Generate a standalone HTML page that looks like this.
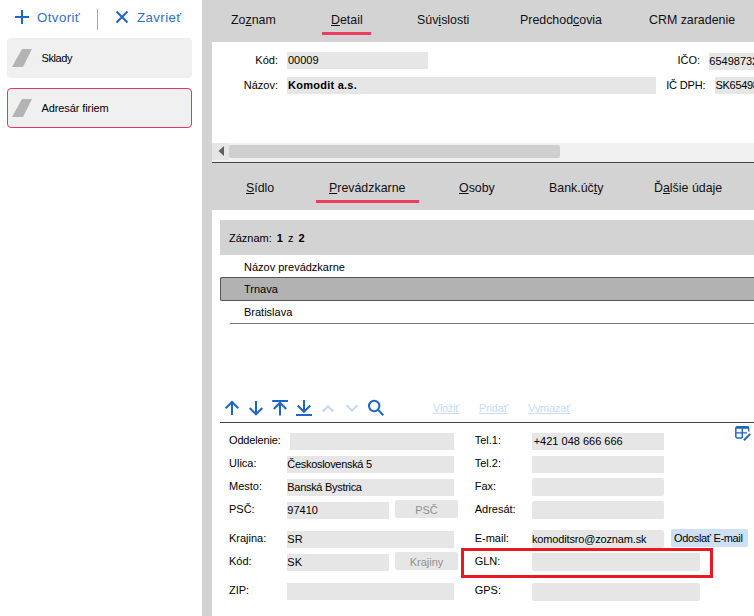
<!DOCTYPE html>
<html><head><meta charset="utf-8">
<style>
html,body{margin:0;padding:0;}
body{width:754px;height:616px;overflow:hidden;background:#fff;position:relative;font-family:"Liberation Sans",sans-serif;font-size:11px;color:#000;}
.a{position:absolute;white-space:nowrap;}
.t{position:absolute;white-space:nowrap;line-height:14px;height:14px;}
.tab{font-size:12.4px;line-height:16px;height:16px;color:#111;}
.f{position:absolute;background:#e6e6e6;height:17px;}
.blue{color:#2f6fc6;}
.btn{position:absolute;background:#e6e6e6;border-radius:2px;color:#909090;text-align:center;line-height:20px;font-size:11px;}
u{text-decoration:underline;text-underline-offset:1px;}
</style></head><body>
<!-- left panel -->
<svg class="a" style="left:14px;top:9px" width="16" height="16" viewBox="0 0 16 16"><path d="M8 1v14M1 8h14" stroke="#1f66c4" stroke-width="2" fill="none"/></svg>
<div class="t blue" style="left:37px;top:9px;font-size:13.3px;line-height:17px;height:17px;letter-spacing:0.4px">Otvoriť</div>
<div class="a" style="left:97px;top:9px;width:1px;height:21px;background:#a9a6c9"></div>
<svg class="a" style="left:115px;top:10px" width="14" height="14" viewBox="0 0 14 14"><path d="M1.5 1.5l11 11M12.5 1.5l-11 11" stroke="#1f66c4" stroke-width="2" fill="none"/></svg>
<div class="t blue" style="left:137px;top:9px;font-size:13.3px;line-height:17px;height:17px;letter-spacing:0.4px">Zavrieť</div>

<div class="a" style="left:7px;top:38px;width:185px;height:40px;background:#f0f0f0;border-radius:4px"></div>
<svg class="a" style="left:12px;top:49px" width="21" height="18" viewBox="0 0 21 18"><path d="M10 0H20L11 18H0z" fill="#b4b4b4"/></svg>
<div class="t" style="left:41.5px;top:51px;letter-spacing:-0.4px">Sklady</div>

<div class="a" style="left:7px;top:88px;width:183px;height:38px;background:#f0f0f0;border:1px solid #e23a62;border-radius:4px"></div>
<svg class="a" style="left:12px;top:99px" width="21" height="18" viewBox="0 0 21 18"><path d="M10 0H20L11 18H0z" fill="#b4b4b4"/></svg>
<div class="t" style="left:41.5px;top:101px;letter-spacing:-0.1px">Adresár firiem</div>

<!-- right gray panel -->
<div class="a" style="left:202px;top:0;width:552px;height:616px;background:#d3d3d3"></div>
<!-- top tabs -->
<div class="t tab" style="left:231px;top:12px">Zo<u>z</u>nam</div>
<div class="t tab" style="left:331px;top:12px"><u>D</u>etail</div>
<div class="a" style="left:322px;top:32px;width:49px;height:3px;background:#ee3c61"></div>
<div class="t tab" style="left:417px;top:12px">Súv<u>i</u>slosti</div>
<div class="t tab" style="left:520px;top:12px">Predchod<u>c</u>ovia</div>
<div class="t tab" style="left:649px;top:12px">CRM zaradenie</div>
<!-- top white -->
<div class="a" style="left:212px;top:42px;width:542px;height:120px;background:#fff"></div>
<div class="t" style="left:212px;width:66px;text-align:right;top:53px">Kód:</div>
<div class="f" style="left:287px;top:52px;width:141px"></div>
<div class="t" style="left:288px;top:53px">00009</div>
<div class="t" style="left:212px;width:66px;text-align:right;top:78px">Názov:</div>
<div class="f" style="left:287px;top:77px;width:369px"></div>
<div class="t" style="left:288px;top:78px;font-weight:bold;letter-spacing:0.25px">Komodit a.s.</div>
<div class="t" style="left:640px;width:60px;text-align:right;top:53px">IČO:</div>
<div class="f" style="left:709px;top:53px;width:45px"></div>
<div class="t" style="left:709.3px;top:54px">65498732</div>
<div class="t" style="left:640px;width:65.5px;text-align:right;top:78px;letter-spacing:-0.15px">IČ DPH:</div>
<div class="f" style="left:715px;top:77px;width:39px"></div>
<div class="t" style="left:715.5px;top:78px;letter-spacing:-0.3px">SK65498732</div>
<!-- scrollbar -->
<div class="a" style="left:212px;top:143px;width:542px;height:19px;background:#f0f0f0"></div>
<div class="a" style="left:212px;top:143px;width:17px;height:17px;background:#e6e6e6"></div>
<div class="a" style="left:229px;top:145px;width:331px;height:13px;background:#cfcfcf;border-radius:2px"></div>
<svg class="a" style="left:217px;top:146px" width="8" height="10" viewBox="0 0 8 10"><path d="M7 0v10L1.5 5z" fill="#606060"/></svg>
<div class="a" style="left:212px;top:162px;width:542px;height:1px;background:#444"></div>
<!-- second tabs -->
<div class="t tab" style="left:246px;top:180px"><u>S</u>ídlo</div>
<div class="t tab" style="left:329px;top:180px"><u>P</u>revádzkarne</div>
<div class="a" style="left:316px;top:200px;width:103px;height:3px;background:#ee3c61"></div>
<div class="t tab" style="left:459px;top:180px"><u>O</u>soby</div>
<div class="t tab" style="left:549px;top:180px">Bank.úč<u>t</u>y</div>
<div class="t tab" style="left:654px;top:180px">Ď<u>a</u>lšie údaje</div>
<!-- bottom white -->
<div class="a" style="left:212px;top:210px;width:542px;height:406px;background:#fff"></div>
<div class="a" style="left:220px;top:220px;width:534px;height:35px;background:#d3d3d3"></div>
<div class="t" style="left:229px;top:231px;word-spacing:2px">Záznam: <b>1</b> z <b>2</b></div>
<div class="t" style="left:244px;top:260px">Názov prevádzkarne</div>
<div class="a" style="left:220px;top:277px;width:534px;height:22px;background:#b2b2b2;border:1px solid #555;border-right:none;border-radius:2px 0 0 2px"></div>
<div class="t" style="left:244px;top:282px">Trnava</div>
<div class="t" style="left:244px;top:305px">Bratislava</div>
<div class="a" style="left:230px;top:323px;width:524px;height:1px;background:#777"></div>
<!-- toolbar -->
<div class="a" style="left:220px;top:422px;width:534px;height:1px;background:#444"></div>
<div class="t" style="left:433px;top:401px;color:#c6dbf4;letter-spacing:-0.37px;text-decoration:underline">Vložiť</div>
<div class="t" style="left:479px;top:401px;color:#c6dbf4;letter-spacing:-0.2px;text-decoration:underline">Pridať</div>
<div class="t" style="left:528px;top:401px;color:#c6dbf4;letter-spacing:-0.2px;text-decoration:underline">Vymazať</div>

<!-- toolbar icons -->
<svg class="a" style="left:220px;top:396px" width="170" height="24" viewBox="220 396 170 24" fill="none" stroke="#1f66c4" stroke-width="2">
<path d="M232 415V402.3M225.7 408.3l6.3-6.3 6.3 6.3"/>
<path d="M256 401V414M249.7 408l6.3 6.3 6.3-6.3"/>
<path d="M272.2 401h15.8M280 415.5V403M273.7 409l6.3-6.3 6.3 6.3"/>
<path d="M296 415h16M304 400V411M297.7 405.5l6.3 6.3 6.3-6.3"/>
<path d="M322.5 411.5l5.5-5.2 5.5 5.2" stroke="#c3d8f2" stroke-width="2"/>
<path d="M346.5 405.3l5.5 5.2 5.5-5.2" stroke="#c3d8f2" stroke-width="2"/>
<circle cx="374.2" cy="406" r="5.2"/><path d="M378 409.8l5.3 5.4"/>
</svg>
<svg class="a" style="left:733px;top:424px" width="20" height="19" viewBox="733 424 20 19" fill="none" stroke="#1f66c4">
<path d="M742 438H737.5a1.7 1.7 0 0 1-1.7-1.7V428.5a1.7 1.7 0 0 1 1.7-1.7H747a1.7 1.7 0 0 1 1.7 1.7V431.5" stroke-width="1.5"/>
<path d="M736 427.7H748.5" stroke-width="2.2"/>
<path d="M742.3 427V438M736 432.9H747" stroke-width="1.4"/>
<path d="M743.9 440.2L750.3 433.9" stroke-width="2"/>
</svg>
<!-- form left -->
<div class="t" style="left:229px;top:433px;letter-spacing:-0.15px">Oddelenie:</div>
<div class="f" style="left:290px;top:433px;width:164px;height:17px"></div>
<div class="t" style="left:229px;top:456px">Ulica:</div>
<div class="f" style="left:287px;top:456px;width:167px"></div>
<div class="t" style="left:287.3px;top:457px;letter-spacing:-0.3px">Československá 5</div>
<div class="t" style="left:229px;top:479px">Mesto:</div>
<div class="f" style="left:287px;top:479px;width:167px"></div>
<div class="t" style="left:287.3px;top:480px;letter-spacing:-0.3px">Banská Bystrica</div>
<div class="t" style="left:229px;top:502px">PSČ:</div>
<div class="f" style="left:287px;top:502px;width:102px"></div>
<div class="t" style="left:287.3px;top:503px">97410</div>
<div class="btn" style="left:395px;top:500px;width:63px;height:18px">PSČ</div>
<div class="t" style="left:229px;top:531px">Krajina:</div>
<div class="f" style="left:287px;top:531px;width:167px"></div>
<div class="t" style="left:287.3px;top:532px">SR</div>
<div class="t" style="left:229px;top:554px">Kód:</div>
<div class="f" style="left:287px;top:554px;width:102px"></div>
<div class="t" style="left:287.3px;top:555px">SK</div>
<div class="btn" style="left:395px;top:552px;width:63px;height:18px">Krajiny</div>
<div class="t" style="left:229px;top:583px">ZIP:</div>
<div class="f" style="left:287px;top:583px;width:167px"></div>
<!-- form right -->
<div class="t" style="left:474.7px;top:433px">Tel.1:</div>
<div class="f" style="left:532px;top:433px;width:132px"></div>
<div class="t" style="left:533.7px;top:434px">+421 048 666 666</div>
<div class="t" style="left:474.7px;top:456px">Tel.2:</div>
<div class="f" style="left:532px;top:456px;width:132px"></div>
<div class="t" style="left:474.7px;top:479px">Fax:</div>
<div class="f" style="left:532px;top:478px;width:132px;height:18px;border-radius:2px"></div>
<div class="t" style="left:474.7px;top:502px">Adresát:</div>
<div class="f" style="left:532px;top:501px;width:132px;height:18px;border-radius:2px"></div>
<div class="t" style="left:474.7px;top:531px">E-mail:</div>
<div class="f" style="left:532px;top:530px;width:132px;height:18px;border-radius:2px"></div>
<div class="t" style="left:532px;top:532px;letter-spacing:-0.16px">komoditsro@zoznam.sk</div>
<div class="a" style="left:671px;top:529px;width:77px;height:18px;background:#cfe0f5;border-radius:2px"></div>
<div class="t" style="left:674px;top:531px;letter-spacing:-0.33px">Odoslať E-mail</div>
<div class="t" style="left:474.7px;top:554px">GLN:</div>
<div class="f" style="left:532px;top:553px;width:168px;height:18px;border-radius:2px"></div>
<div class="a" style="left:461px;top:548px;width:246px;height:24px;border:3px solid #ea1820"></div>
<div class="t" style="left:474.7px;top:583px">GPS:</div>
<div class="f" style="left:532px;top:583px;width:168px;height:18px;border-radius:2px"></div>
</body></html>
